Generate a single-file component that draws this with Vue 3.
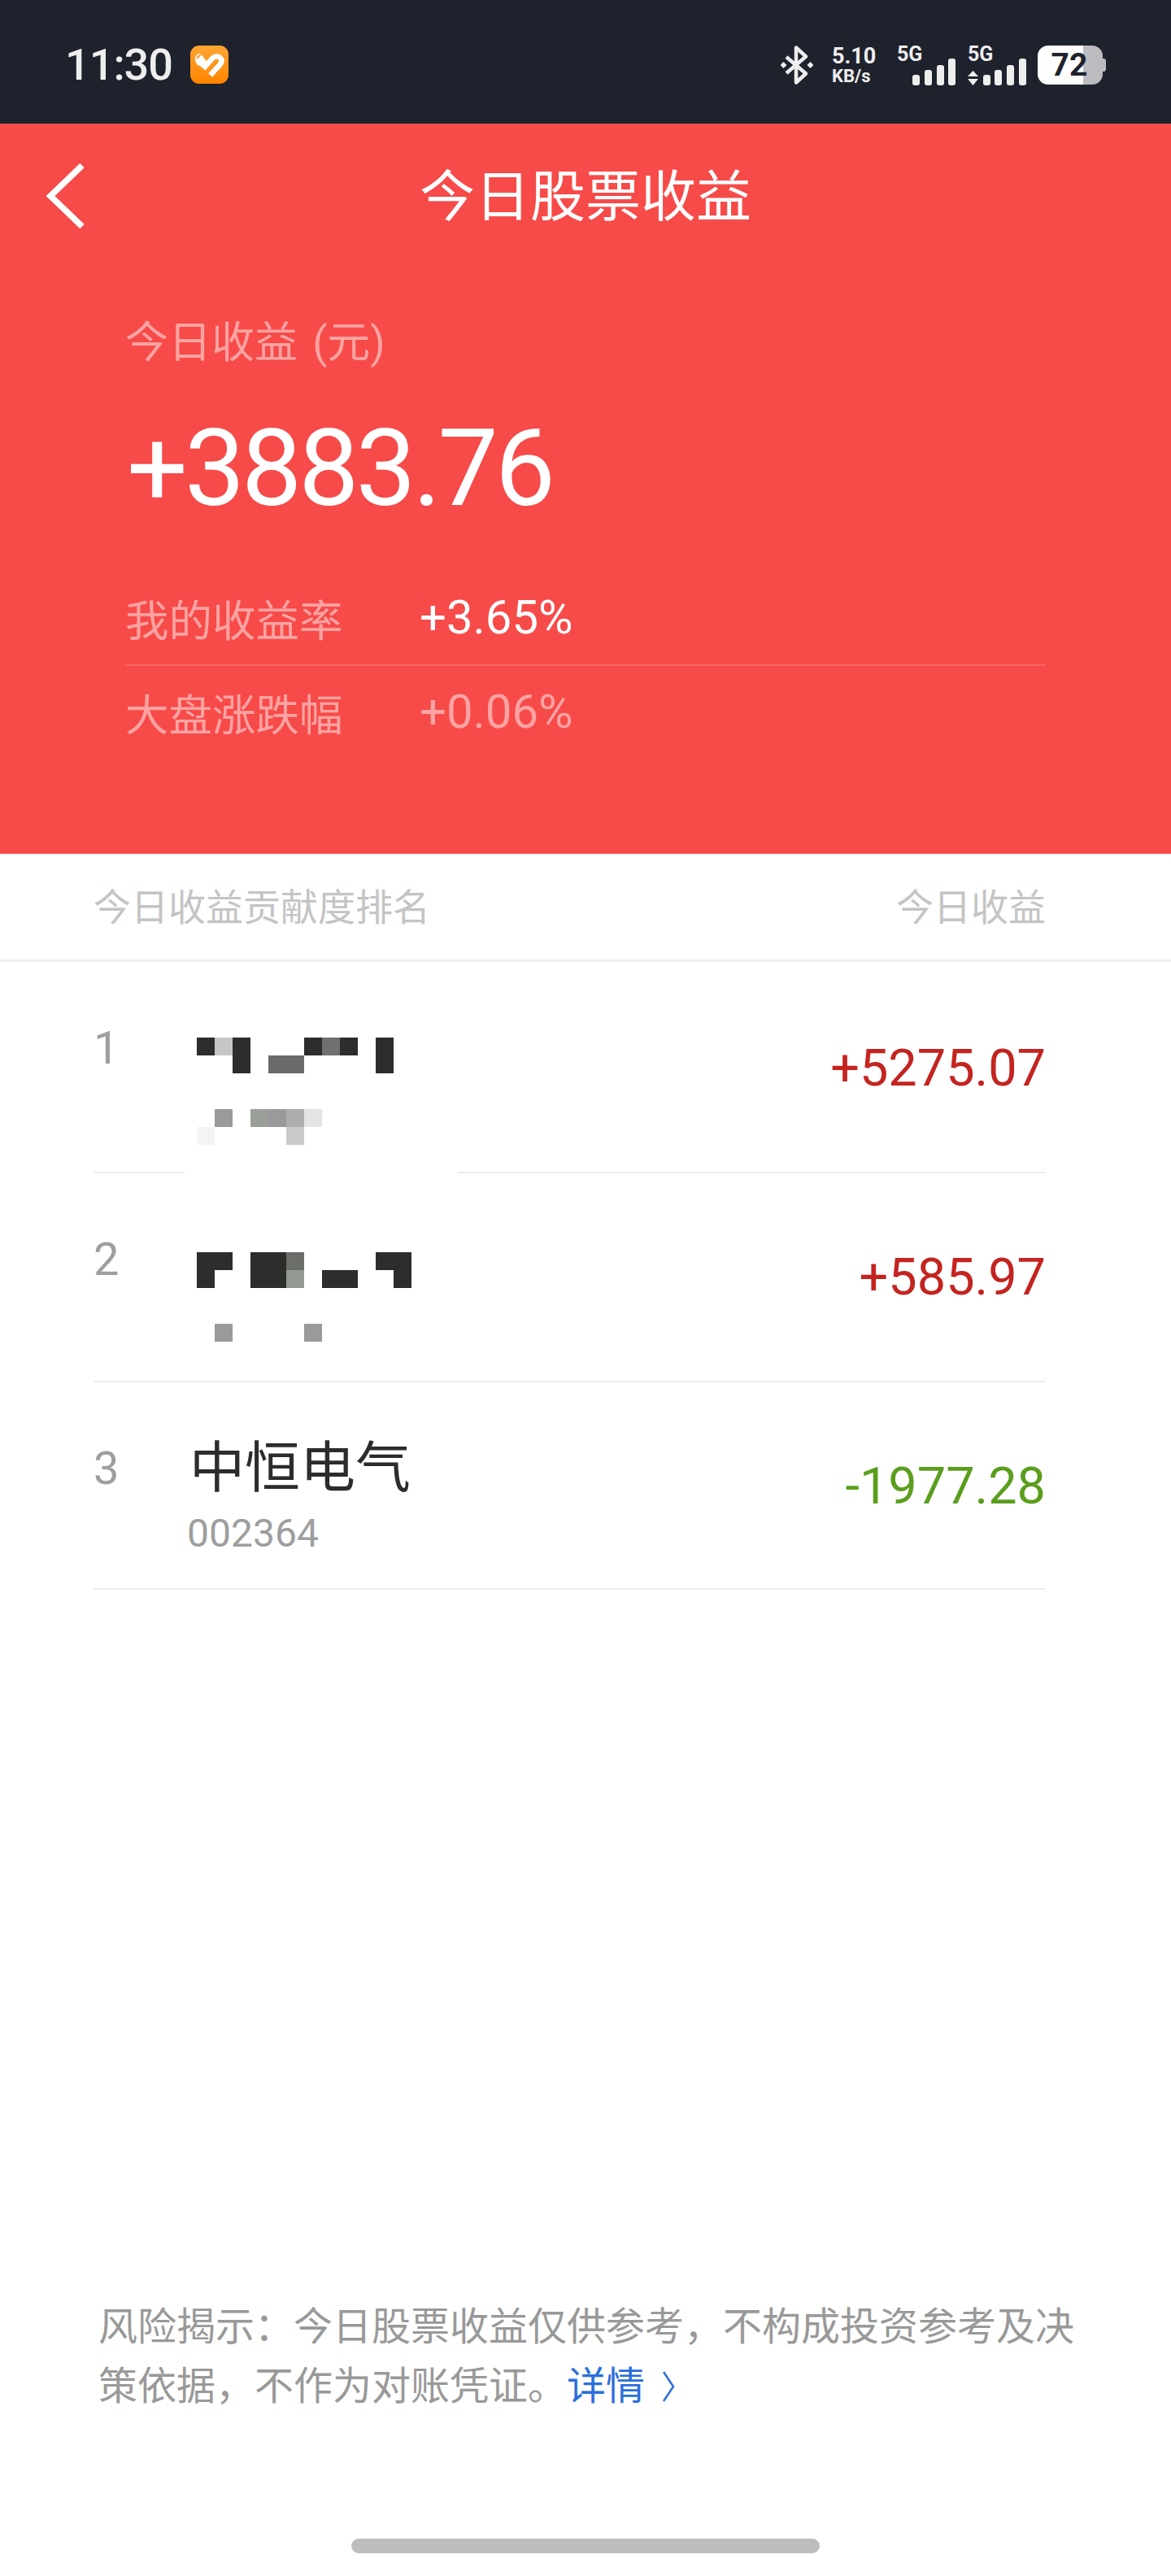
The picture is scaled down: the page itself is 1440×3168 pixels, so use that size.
<script setup>
import { ref } from 'vue';

const dark = '#2c2e2b';

// pixelated stock names, one string per row, '.' is a blank cell
const colors = {
  d: dark,
  a: '#c6c6c6',
  b: '#706f71',
  c: '#6a6b68',
  e: '#9b999c',
  f: '#9aa097',
  g: '#adadad',
  h: '#e6e3e7',
  i: '#f6f3f6',
  j: '#cbc9cc',
  k: '#6c6e6a',
  l: '#949a93',
};

const stocks = ref([
  {
    rank: 1,
    value: '+5275.07',
    tone: 'up',
    height: 260,
    mosaic: [
      'dad...dbd.d.',
      '..d.cc....d.',
      '............',
      '............',
      '.e.fegh.....',
      'i....j......',
    ],
  },
  {
    rank: 2,
    value: '+585.97',
    tone: 'up',
    height: 257,
    mosaic: [
      'dd.ddk....dd',
      'd..ddl.dd..d',
      '............',
      '............',
      '.e....e.....',
    ],
  },
  { rank: 3, value: '-1977.28', tone: 'down', height: 255, name: '中恒电气', code: '002364' },
]);

const cellsOf = (rows) => rows.join('').split('');
const cellColor = (c) => (colors[c] ? colors[c] : 'transparent');
</script>

<template>
  <div class="page">
    <div class="status">
      <div class="status-left">
        <span class="time">11:30</span>
        <svg class="app-icon" width="47" height="47" viewBox="0 0 47 47">
          <defs>
            <linearGradient id="orange" x1="0" y1="0" x2="0" y2="1">
              <stop offset="0" stop-color="#ffa533" />
              <stop offset="1" stop-color="#ff8400" />
            </linearGradient>
          </defs>
          <rect width="47" height="47" rx="11" fill="url(#orange)" />
          <path d="M8.500 23.500 C4 18 5.500 10.500 12.500 9.500 L20 19.500 L14 26.500 Z" fill="#fff" />
          <path d="M8 16 L13.500 10" fill="none" stroke="#ff9a20" stroke-width="2" />
          <path d="M16 28.500 L27 16 C29.500 13 33 12.500 36 14.500 C39.500 17.500 39 20.500 36.500 23.500 L24.500 36.500" fill="none" stroke="#fff" stroke-width="6.500" />
        </svg>
      </div>
      <div class="status-right">
        <svg class="bt" width="40" height="48" viewBox="0 0 40 48">
          <path d="M19 24 V2.500 L31 13.500 L7 34 M19 24 V45.500 L31 34.500 L7 14" fill="none" stroke="#eee" stroke-width="4.500" stroke-linejoin="round" />
          <path d="M3.500 20 L7.500 24 L3.500 28 L-.5 24 Z M36.500 20 L40.500 24 L36.500 28 L32.500 24 Z" fill="#eee" />
        </svg>
        <div class="speed">
          <span class="speed-num">5.10</span>
          <span class="speed-unit">KB/s</span>
        </div>
        <div class="net net-first">
          <span class="net-label">5G</span>
          <svg class="bars" width="72" height="33" viewBox="0 0 72 33">
            <rect x="19" y="20" width="9" height="13" rx="3" fill="#eee" />
            <rect x="34" y="14" width="9" height="19" rx="3" fill="#eee" />
            <rect x="49" y="8" width="9" height="25" rx="3" fill="#eee" />
            <rect x="63" y="0" width="9" height="33" rx="3" fill="#eee" />
          </svg>
        </div>
        <div class="net">
          <span class="net-label">5G</span>
          <svg class="bars" width="72" height="33" viewBox="0 0 72 33">
            <path d="M0 22 L6.500 15 L13 22 Z M0 25 H13 L6.500 33 Z" fill="#eee" />
            <rect x="19" y="20" width="9" height="13" rx="3" fill="#eee" />
            <rect x="33" y="14" width="9" height="19" rx="3" fill="#eee" />
            <rect x="48" y="8" width="9" height="25" rx="3" fill="#eee" />
            <rect x="63" y="0" width="9" height="33" rx="3" fill="#eee" />
          </svg>
        </div>
        <div class="battery">
          <div class="battery-body">
            <span class="battery-text">72</span>
          </div>
          <div class="battery-nub"></div>
        </div>
      </div>
    </div>

    <div class="hero">
      <div class="nav">
        <svg class="back" width="50" height="82" viewBox="0 0 50 82">
          <path d="M46 3.500 L7 41 L46 78.500" fill="none" stroke="#fff" stroke-width="7.500" />
        </svg>
        <span class="nav-title">今日股票收益</span>
      </div>
      <div class="hero-body">
        <div class="hero-label">今日收益 (元)</div>
        <div class="hero-num">+3883.76</div>
        <div class="stats">
          <div class="stat stat-mine">
            <span class="stat-label">我的收益率</span>
            <span class="stat-value">+3.65%</span>
          </div>
          <div class="stat stat-market">
            <span class="stat-label">大盘涨跌幅</span>
            <span class="stat-value stat-dim">+0.06%</span>
          </div>
        </div>
      </div>
    </div>

    <div class="list-head">
      <span>今日收益贡献度排名</span>
      <span>今日收益</span>
    </div>

    <div class="list">
      <div
        v-for="item in stocks"
        :key="item.rank"
        class="row"
        :class="'row-' + item.rank"
        :style="{ height: item.height + 'px' }"
      >
        <span class="rank">{{ item.rank }}</span>
        <div class="stock">
          <div v-if="item.mosaic" class="mosaic">
            <i
              v-for="(c, i) in cellsOf(item.mosaic)"
              :key="i"
              class="cell"
              :style="{ background: cellColor(c) }"
            ></i>
          </div>
          <template v-else>
            <div class="stock-name">{{ item.name }}</div>
            <div class="stock-code">{{ item.code }}</div>
          </template>
        </div>
        <span class="value" :class="item.tone">{{ item.value }}</span>
      </div>
    </div>

    <div class="spacer"></div>

    <div class="risk">
      <div>风险揭示：今日股票收益仅供参考，不构成投资参考及决</div>
      <div class="risk-last">
        <span>策依据，不作为对账凭证。</span>
        <span class="risk-link">详情</span>
        <svg class="risk-arrow" width="18" height="38" viewBox="0 0 18 38"><path d="M3 1 L15 19 L3 37" fill="none" stroke="#2a6fdb" stroke-width="2.500" /></svg>
      </div>
    </div>

    <div class="home-wrap">
      <div class="home-bar"></div>
    </div>
  </div>
</template>

<style scoped>
.page {
  width: 1440px;
  height: 3168px;
  display: flex;
  flex-direction: column;
  background: #fff;
  font-family: Roboto, "Noto Sans CJK SC", sans-serif;
  overflow: hidden;
}

.status {
  height: 152px;
  flex: none;
  background: #1e222d;
  display: flex;
  justify-content: space-between;
  color: #eee;
}

.status-left {
  display: flex;
  align-items: center;
  padding: 7px 0 0 80px;
}

.time {
  font-size: 54px;
  line-height: 60px;
  font-weight: 500;
  letter-spacing: -1px;
}

.app-icon {
  margin-left: 22px;
}

.status-right {
  display: flex;
  align-items: flex-start;
  padding: 56px 80px 0 0;
}

.speed {
  display: flex;
  flex-direction: column;
  margin-left: 23px;
  width: 56px;
  font-weight: 700;
}

.speed-num {
  font-size: 27px;
  line-height: 26px;
}

.speed-unit {
  font-size: 22px;
  line-height: 23px;
}

.net {
  position: relative;
  width: 72px;
  height: 49px;
  margin-left: 15px;
}

.net-first {
  margin-left: 24px;
}

.net-label {
  position: absolute;
  left: 0;
  top: 0;
  font-size: 25px;
  line-height: 22px;
  font-weight: 700;
}

.bars {
  position: absolute;
  left: 0;
  bottom: 0;
}

.battery {
  display: flex;
  align-items: center;
  margin-left: 14px;
}

.battery-body {
  width: 80px;
  height: 48px;
  border-radius: 13px;
  background: linear-gradient(90deg, #fff 56px, #bcbcc0 56px);
  display: flex;
  justify-content: center;
  padding-right: 2px;
  box-sizing: border-box;
  overflow: hidden;
}

.battery-text {
  font-size: 39px;
  line-height: 48px;
  font-weight: 700;
  color: #1e222d;
}

.battery-nub {
  width: 4px;
  height: 16px;
  background: #bcbcc0;
  border-radius: 0 3px 3px 0;
}

.hero {
  height: 898px;
  flex: none;
  background: #f64b49;
  color: #fff;
}

.nav {
  position: relative;
  height: 178px;
  display: flex;
  align-items: center;
  justify-content: center;
}

.back {
  position: absolute;
  left: 55px;
  top: 48px;
}

.nav-title {
  font-size: 68px;
  line-height: 80px;
  padding-top: 4px;
}

.hero-body {
  padding: 57px 154px 0;
}

.hero-label {
  font-size: 53px;
  line-height: 70px;
  word-spacing: 5px;
  color: #ffa3a2;
}

.hero-num {
  margin-top: 49px;
  font-size: 132px;
  line-height: 140px;
  letter-spacing: -4px;
  margin-left: 2px;
}

.stats {
  margin-top: 59px;
}

.stat {
  display: flex;
  align-items: center;
}

.stat-mine {
  height: 114px;
  border-bottom: 2px solid #fa6665;
  padding-bottom: 4px;
  box-sizing: border-box;
}

.stat-market {
  height: 112px;
}

.stat-label {
  width: 362px;
  font-size: 53.5px;
  color: #ffa3a2;
}

.stat-value {
  font-size: 58px;
}

.stat-dim {
  color: #ffa3a2;
}

.list-head {
  height: 130px;
  flex: none;
  box-sizing: border-box;
  padding: 0 154px 6px 115px;
  display: flex;
  justify-content: space-between;
  align-items: center;
  font-size: 46px;
  color: #c4c4c4;
}

.list {
  border-top: 3px solid #eee;
  flex: none;
}

.row {
  margin: 0 154px 0 115px;
  display: flex;
  box-sizing: border-box;
  border-bottom: 2px solid #eee;
}

/* the blur over the first name also wiped part of the divider */
.row-1 {
  border-bottom: 0;
  background: linear-gradient(90deg, #eee 112px, #fff 112px, #fff 448px, #eee 448px) left bottom / 100% 2px no-repeat;
}

.rank {
  width: 115px;
  flex: none;
  padding-top: 76px;
  font-size: 56px;
  line-height: 60px;
  color: #9e9e9e;
}

.stock {
  flex: 1;
}

.mosaic {
  display: grid;
  grid-template-columns: repeat(12, 22px);
  grid-auto-rows: 22px;
  margin-left: 12px;
}

.row-1 .mosaic {
  margin-top: 93px;
}

.row-2 .mosaic {
  margin-top: 97px;
}

.stock-name {
  margin: 66px 0 0 3px;
  font-size: 68px;
  line-height: 80px;
  color: #2c2c2c;
}

.stock-code {
  margin-top: 10px;
  font-size: 48px;
  line-height: 60px;
  color: #9e9e9e;
}

.value {
  align-self: center;
  font-size: 63px;
}

.row-3 .value {
  padding-top: 2px;
}

.up {
  color: #c42420;
}

.down {
  color: #5b9e1e;
}

.spacer {
  flex: 1;
}

.risk {
  width: 1210px;
  margin-left: 121px;
  font-size: 48px;
  line-height: 73px;
  color: #999;
}

.risk-last {
  display: flex;
  align-items: center;
}

.risk-link {
  color: #2a6fdb;
}

.risk-arrow {
  margin-left: 20px;
}

.home-wrap {
  display: flex;
  justify-content: center;
  padding: 151px 0 28px;
}

.home-bar {
  width: 576px;
  height: 18px;
  border-radius: 9px;
  background: #bdbdbd;
}
</style>
